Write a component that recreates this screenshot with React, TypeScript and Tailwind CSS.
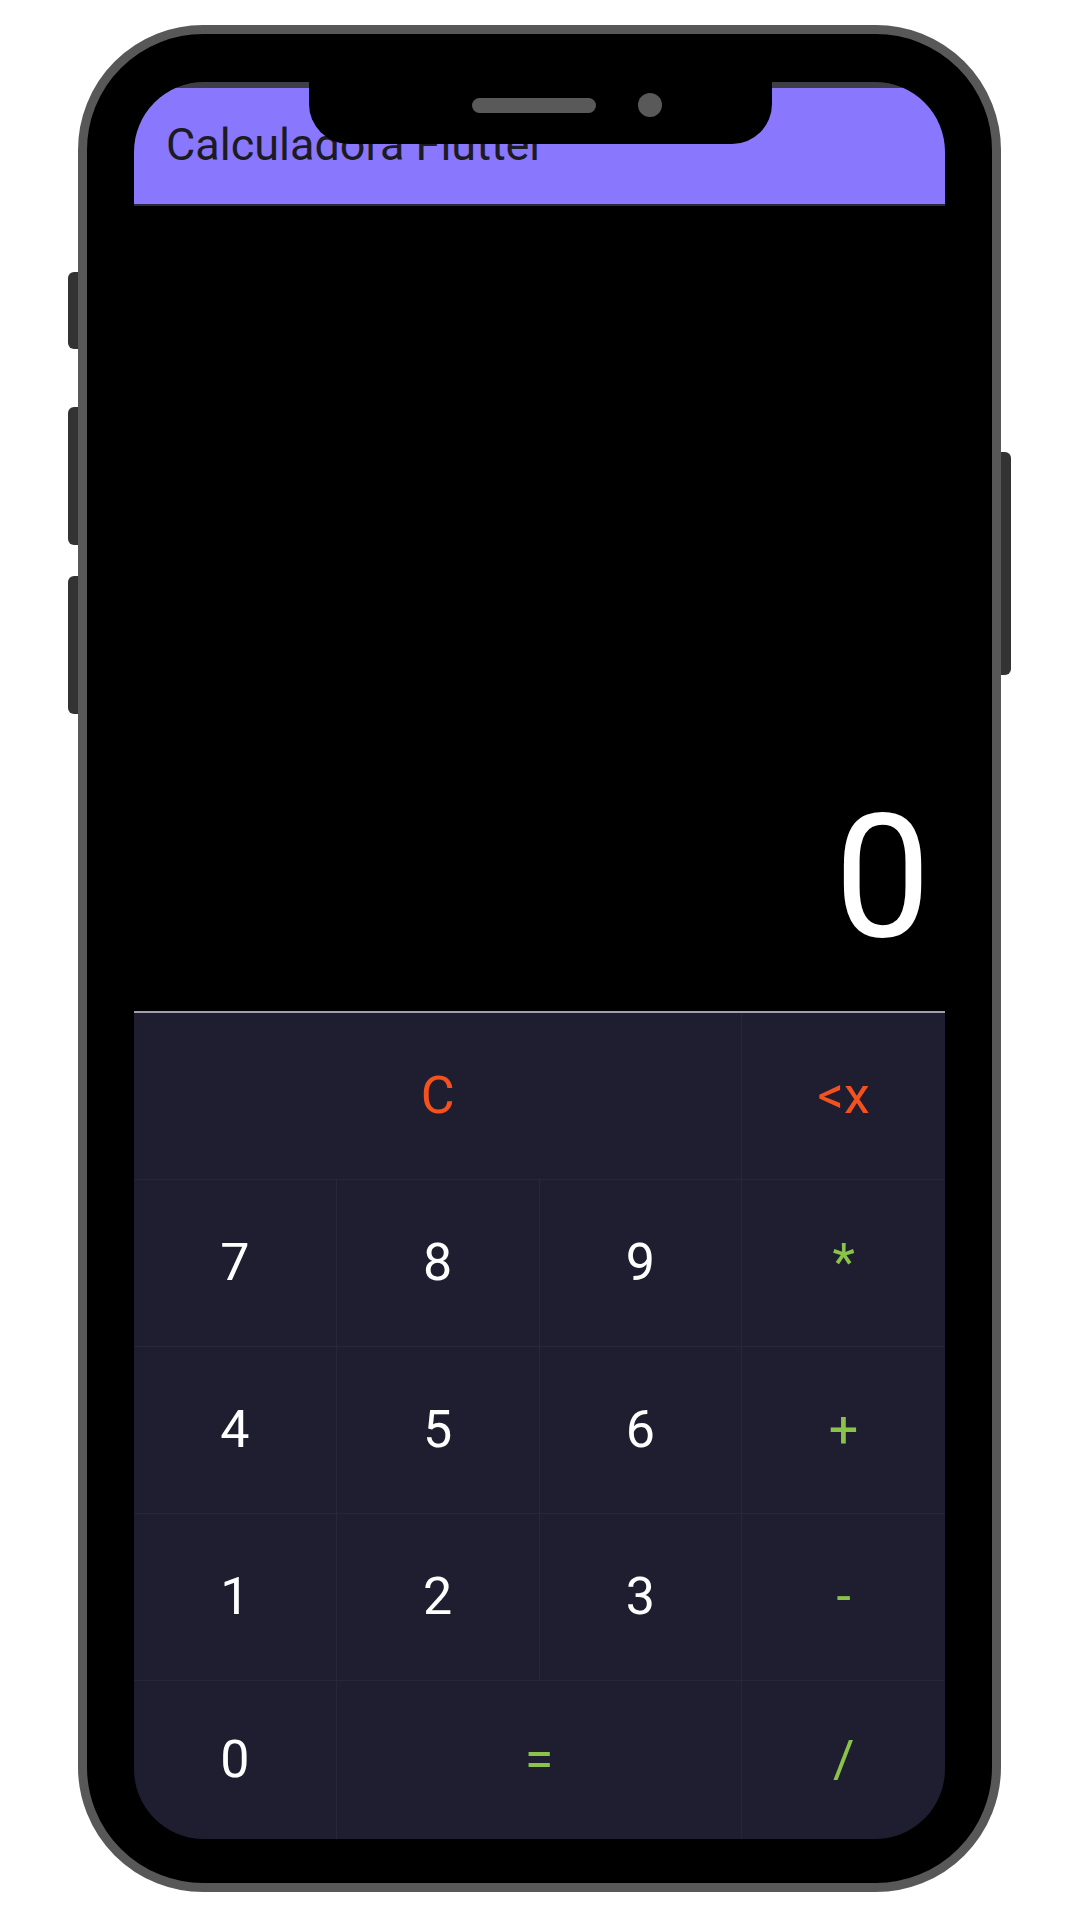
const keys = [
  { label: "C", span: "col-span-3", color: "text-[#f4511e]" },
  { label: "<x", span: "", color: "text-[#f4511e]" },
  { label: "7", span: "", color: "text-white" },
  { label: "8", span: "", color: "text-white" },
  { label: "9", span: "", color: "text-white" },
  { label: "*", span: "", color: "text-[#8bc34a]" },
  { label: "4", span: "", color: "text-white" },
  { label: "5", span: "", color: "text-white" },
  { label: "6", span: "", color: "text-white" },
  { label: "+", span: "", color: "text-[#8bc34a]" },
  { label: "1", span: "", color: "text-white" },
  { label: "2", span: "", color: "text-white" },
  { label: "3", span: "", color: "text-white" },
  { label: "-", span: "", color: "text-[#8bc34a]" },
  { label: "0", span: "", color: "text-white" },
  { label: "=", span: "col-span-2", color: "text-[#8bc34a]" },
  { label: "/", span: "", color: "text-[#8bc34a]" },
]

function Key({ label, span, color, last, bottom }: { label: string; span: string; color: string; last: boolean; bottom: boolean }) {
  return (
    <div
      className={`flex items-center justify-center border-[#28273a] ${span} ${last ? "" : "border-r"} ${bottom ? "" : "border-b"}`}
    >
      <span className={`text-[52px] leading-none ${color}`}>{label}</span>
    </div>
  )
}

export default function App() {
  // figure out which cells end a row / sit in the last row
  let col = 0
  const cells = keys.map((k, i) => {
    const w = k.span === "col-span-3" ? 3 : k.span === "col-span-2" ? 2 : 1
    col += w
    const last = col % 4 === 0
    return { ...k, last, bottom: i >= 14 }
  })

  return (
    <div className="w-[1080px] h-[1920px] bg-white pt-[25px] pl-[78px] font-['Roboto',sans-serif]">
      <div className="relative w-[923px] h-[1867px]">
        {/* side buttons */}
        <div className="absolute left-[-10px] top-[247px] w-[10px] h-[77px] rounded-l-[6px] bg-[#333333]" />
        <div className="absolute left-[-10px] top-[382px] w-[10px] h-[138px] rounded-l-[6px] bg-[#333333]" />
        <div className="absolute left-[-10px] top-[551px] w-[10px] h-[138px] rounded-l-[6px] bg-[#333333]" />
        <div className="absolute right-[-10px] top-[427px] w-[10px] h-[223px] rounded-r-[6px] bg-[#333333]" />

        <div className="w-full h-full rounded-[125px] border-[9px] border-[#585858] bg-black pt-[48px] pb-[44px] px-[47px]">
          <div className="relative h-full rounded-[70px] overflow-hidden bg-black flex flex-col">
            {/* notch */}
            <div className="absolute left-[175px] top-0 w-[463px] h-[62px] rounded-b-[40px] bg-black z-10 flex items-center pl-[163px] pt-[11px] pb-[27px] gap-[42px]">
              <div className="w-[124px] h-[15px] rounded-full bg-[#595959]" />
              <div className="w-[24px] h-[24px] rounded-full bg-[#595959]" />
            </div>

            <div className="h-[6px] bg-[#3f3d46]" />
            <div className="h-[116px] bg-[#8977fe] pl-[32px] pt-[34px]">
              <span className="text-[45px] leading-none text-[#1c1b1f]">Calculadora Flutter</span>
            </div>
            <div className="h-[2px] bg-[#2c2745]" />

            <div className="flex-1 flex items-end justify-end pr-[14px] pb-[48px]">
              <span className="text-[172px] leading-none text-white">0</span>
            </div>

            <div className="h-[2px] bg-[#a29eb0]" />

            <div className="h-[826px] bg-[#1f1e30] grid grid-cols-4 grid-rows-[167px_167px_167px_167px_1fr]">
              {cells.map((c, i) => (
                <Key key={i} label={c.label} span={c.span} color={c.color} last={c.last} bottom={c.bottom} />
              ))}
            </div>
          </div>
        </div>
      </div>
    </div>
  )
}
